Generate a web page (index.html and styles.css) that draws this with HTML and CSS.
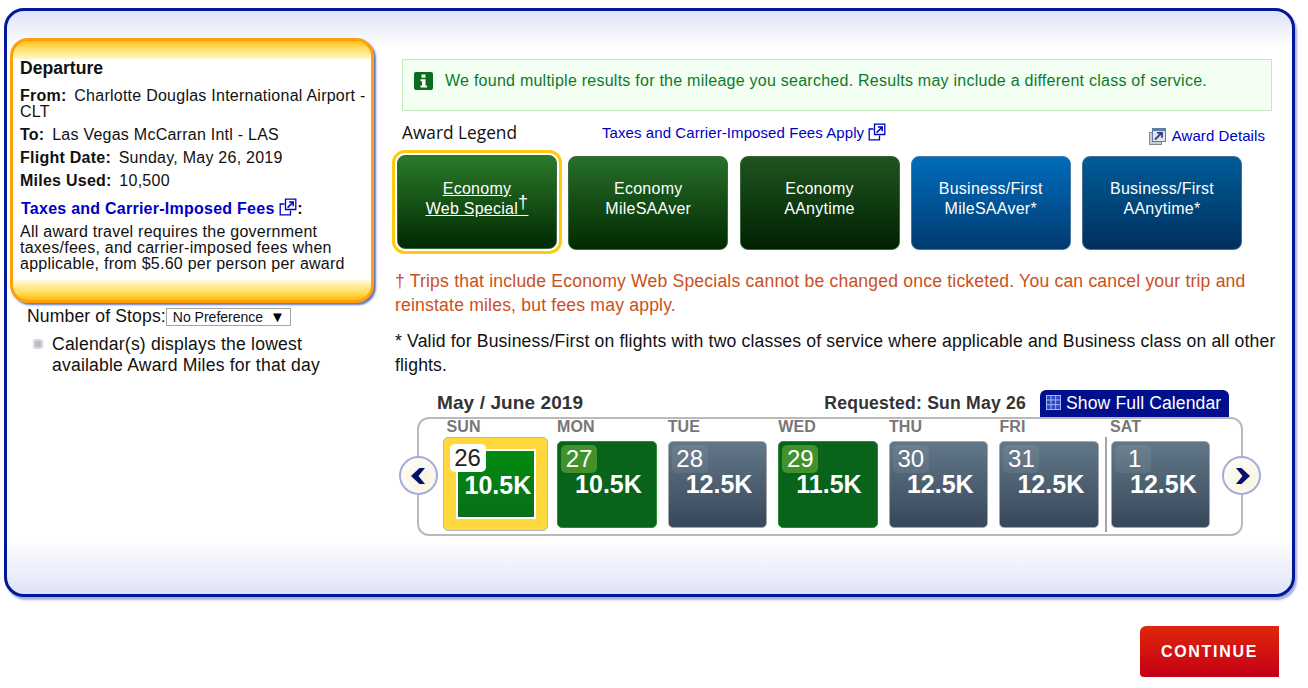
FILE: index.html
```html
<!DOCTYPE html>
<html lang="en">
<head>
<meta charset="utf-8">
<title>Award calendar</title>
<link rel="stylesheet" href="styles.css">
</head>
<body>
<svg class="defs" width="0" height="0" aria-hidden="true">
  <symbol id="ext" viewBox="0 0 18 18">
    <path d="M6.5 1.2H16.8V11.5H6.5Z" fill="none" stroke="currentColor" stroke-width="1.3"/>
    <path d="M5.5 6H1.2V16.8H11.5V12.5" fill="none" stroke="currentColor" stroke-width="1.3"/>
    <path d="M8.6 9.6L14 4.2M10 4H14.2V8.2" fill="none" stroke="currentColor" stroke-width="1.5"/>
  </symbol>
</svg>
<main class="panel">
  <aside class="side">
    <section class="card">
      <h2 class="card-title">Departure</h2>
      <p class="fact fact-first"><b class="fact-key">From:</b> Charlotte Douglas International Airport - CLT</p>
      <p class="fact"><b class="fact-key">To:</b> Las Vegas McCarran Intl - LAS</p>
      <p class="fact"><b class="fact-key">Flight Date:</b> Sunday, May 26, 2019</p>
      <p class="fact"><b class="fact-key">Miles Used:</b> 10,500</p>
      <p class="fees-title"><a class="fees-link" href="#">Taxes and Carrier-Imposed Fees <svg class="ext-icon" width="18" height="18"><use href="#ext"/></svg></a>:</p>
      <p class="fees-text">All award travel requires the government taxes/fees, and carrier-imposed fees when applicable, from $5.60 per person per award</p>
    </section>
    <div class="stops">
      <span>Number of Stops:</span>
      <div class="select"><span>No Preference</span><span class="select-arrow">▼</span></div>
    </div>
    <div class="note"><span class="bullet"></span><p class="note-text">Calendar(s) displays the lowest available Award Miles for that day</p></div>
  </aside>

  <div class="content">
    <div class="alert">
      <svg class="info-icon" width="19" height="18" viewBox="0 0 19 18"><rect width="19" height="18" rx="2" fill="#0b6b1e"/><rect x="7.5" y="2.5" width="4" height="3.2" fill="#fff"/><path d="M6.5 7.2H11.5V13.6H13V15.6H6.5V13.6H8V9.2H6.5Z" fill="#fff"/></svg>
      <span>We found multiple results for the mileage you searched. Results may include a different class of service.</span>
    </div>

    <div class="legend-head">
      <h3 class="legend-title">Award Legend</h3>
      <a class="legend-link" href="#">Taxes and Carrier-Imposed Fees Apply <svg class="ext-icon" width="18" height="18"><use href="#ext"/></svg></a>
      <a class="details-link" href="#"><svg class="details-icon" width="17" height="17" viewBox="0 0 17 17"><rect x=".5" y="4.5" width="12" height="12" fill="#c9ccd1" stroke="#85888e"/><rect x="3.5" y=".5" width="13" height="13" fill="#dfe6ee" stroke="#5d7fa3"/><rect x="3.5" y=".5" width="13" height="2.6" fill="#5d7fa3"/><path d="M6 11.5L12.5 5M8 4.8H13V9.8" fill="none" stroke="#3b3a8c" stroke-width="1.8"/></svg> Award Details</a>
    </div>

    <div class="legend">
      <a class="award award-web" href="#"><span class="award-line">Economy</span><span class="award-line">Web Special<sup class="dagger">†</sup></span></a>
      <a class="award award-saver" href="#"><span class="award-line">Economy</span><span class="award-line">MileSAAver</span></a>
      <a class="award award-any" href="#"><span class="award-line">Economy</span><span class="award-line">AAnytime</span></a>
      <a class="award award-bsaver" href="#"><span class="award-line">Business/First</span><span class="award-line">MileSAAver*</span></a>
      <a class="award award-bany" href="#"><span class="award-line">Business/First</span><span class="award-line">AAnytime*</span></a>
    </div>

    <p class="warning">† Trips that include Economy Web Specials cannot be changed once ticketed. You can cancel your trip and reinstate miles, but fees may apply.</p>
    <p class="valid">* Valid for Business/First on flights with two classes of service where applicable and Business class on all other flights.</p>

    <div class="cal-head">
      <strong class="cal-month">May / June 2019</strong>
      <strong class="cal-req">Requested: Sun May 26</strong>
      <a class="cal-tab" href="#"><svg width="15" height="15" viewBox="0 0 15 15"><path d="M0 0H15V15H0Z" fill="#2c44c4"/><path d="M0 .5H15M0 5H15M0 9.7H15M0 14.5H15M.5 0V15M5 0V15M9.7 0V15M14.5 0V15" stroke="#a4b4fa" stroke-width="1"/></svg> Show Full Calendar</a>
    </div>

    <div class="strip">
      <button class="nav nav-prev" aria-label="Previous"><svg width="20" height="20" viewBox="0 0 20 20"><path d="M10.5 2H16L9.5 10L16 18H10.5L2 10Z" fill="#05106e"/></svg></button>
      <div class="day">
        <div class="day-name">SUN</div>
        <div class="cell cell-sel"><span class="date date-sel">26</span><div class="sel-inner"><span class="amount">10.5K</span></div></div>
      </div>
      <div class="day">
        <div class="day-name">MON</div>
        <div class="cell cell-green"><span class="date">27</span><div class="amount">10.5K</div></div>
      </div>
      <div class="day">
        <div class="day-name">TUE</div>
        <div class="cell cell-gray"><span class="date">28</span><div class="amount">12.5K</div></div>
      </div>
      <div class="day">
        <div class="day-name">WED</div>
        <div class="cell cell-green"><span class="date">29</span><div class="amount">11.5K</div></div>
      </div>
      <div class="day">
        <div class="day-name">THU</div>
        <div class="cell cell-gray"><span class="date">30</span><div class="amount">12.5K</div></div>
      </div>
      <div class="day">
        <div class="day-name">FRI</div>
        <div class="cell cell-gray"><span class="date">31</span><div class="amount">12.5K</div></div>
      </div>
      <div class="day day-break">
        <div class="day-name">SAT</div>
        <div class="cell cell-gray"><span class="date">1</span><div class="amount">12.5K</div></div>
      </div>
      <button class="nav nav-next" aria-label="Next"><svg width="20" height="20" viewBox="0 0 20 20"><path d="M9.5 2H4L10.5 10L4 18H9.5L18 10Z" fill="#05106e"/></svg></button>
    </div>
  </div>
</main>
<div class="actions"><a class="continue" href="#">CONTINUE</a></div>
</body>
</html>
```
FILE: styles.css
```css
* { box-sizing: border-box; }
html, body { margin: 0; padding: 0; }
body {
  width: 1308px;
  height: 688px;
  overflow: hidden;
  background: #fff;
  color: #111;
  font: 16px/20px "Liberation Sans", Arial, sans-serif;
  letter-spacing: 0.25px;
}
.defs { position: absolute; }
p, h2, h3 { margin: 0; }
a { color: #0000c4; text-decoration: none; }

.panel {
  display: flex;
  align-items: flex-start;
  width: 1291px;
  height: 589px;
  margin: 8px 0 0 4px;
  border: 3px solid #00189a;
  border-radius: 20px;
  box-shadow: 2px 3px 2px #a9b0dc;
  background:
    linear-gradient(#dde2f6, #fff) top / 100% 36px no-repeat,
    linear-gradient(#fff, #dfe3f7) bottom / 100% 54px no-repeat,
    #fff;
}

/* left column */
.side { width: 364px; margin: 27px 0 0 3px; flex: none; }
.card {
  height: 265px;
  padding: 17px 2px 0 7px;
  border: 3px solid #ff9f0a;
  border-radius: 18px;
  box-shadow: 2px 2px 2px #6674c0;
  background:
    linear-gradient(#ffc21a, #ffe680 55%, #fff8d0) top / 100% 18px no-repeat,
    linear-gradient(#fffbdc, #ffe46a 55%, #ffbb10) bottom / 100% 20px no-repeat,
    #fff;
}
.card-title { font-size: 17.6px; line-height: 20px; font-weight: 700; letter-spacing: 0; }
.fact { margin-top: 7px; line-height: 16px; }
.fact-first { margin-top: 10px; }
.fact-key { margin-right: 3px; }
.fees-title { margin-top: 9px; margin-left: 1px; line-height: 16px; font-weight: 700; }
.fees-link { color: #0000c4; }
.ext-icon { vertical-align: -2px; color: #0000c4; }
.fees-text { margin-top: 7px; line-height: 16px; }
.stops {
  display: flex;
  align-items: center;
  margin: 3px 0 0 17px;
  font-size: 17.6px;
  line-height: 20px;
  letter-spacing: 0.12px;
}
.select {
  display: flex;
  justify-content: space-between;
  align-items: center;
  width: 125px;
  height: 18px;
  margin-top: 2px;
  padding: 0 5px 0 6px;
  border: 1px solid #a6a6a6;
  background: #fff;
  font-size: 14px;
  letter-spacing: 0;
}
.select-arrow { font-size: 15px; color: #000; }
.note { display: flex; margin: 8px 0 0 23px; }
.bullet {
  flex: none;
  width: 10px;
  height: 10px;
  margin: 5px 9px 0 0;
  border-radius: 4px;
  background: #b8bcc2;
  box-shadow: inset 0 0 0 2px #d6d8dc;
}
.note-text { width: 300px; font-size: 17.6px; line-height: 21px; letter-spacing: 0.18px; }

/* right column */
.content { width: 882px; margin-left: 21px; padding-top: 48px; flex: none; }
.alert {
  display: flex;
  align-items: flex-start;
  gap: 12px;
  width: 870px;
  height: 52px;
  margin-left: 7px;
  padding: 11px 11px 0;
  border: 1px solid #c4e8bd;
  background: #f3fff2;
  color: #0d7a2a;
}
.info-icon { flex: none; margin-top: 1px; }
.legend-head { display: flex; align-items: flex-start; height: 22px; margin: 12px 0 0 7px; width: 863px; }
.legend-title {
  width: 200px;
  font: 400 17.3px/20px "Open Sans", sans-serif;
  letter-spacing: 0;
  color: #111;
}
.legend-link { line-height: 20px; white-space: nowrap; font-size: 15px; letter-spacing: 0.08px; }
.legend-link .ext-icon { vertical-align: -3px; }
.details-link { margin-left: auto; padding-top: 2px; line-height: 22px; white-space: nowrap; font-size: 15px; letter-spacing: 0.08px; }
.details-icon { vertical-align: -4px; margin-right: 2px; }

.legend { display: flex; gap: 11.25px; height: 95px; margin: 10px 0 0 2px; }
.award {
  width: 160px;
  height: 94px;
  margin-top: 1px;
  padding-top: 22px;
  border: 1px solid #3a6a3a;
  border-radius: 8px;
  color: #fff;
  text-align: center;
  line-height: 20px;
}
.award-line { display: block; }
.award-web {
  margin-top: 0;
  padding-top: 23px;
  outline: 3px solid #ffc90e;
  outline-offset: 2px;
  background: linear-gradient(#2b7a2b, #012901);
  text-decoration: underline;
}
.award-web .award-line { text-decoration: underline; }
.dagger { font-size: 18px; line-height: 0; }
.award-saver { background: linear-gradient(#276f2a, #012901); }
.award-any { background: linear-gradient(#1f5420, #012001); }
.award-bsaver { background: linear-gradient(#016cbc, #003b70); border-color: #4a78a0; }
.award-bany { background: linear-gradient(#005c98, #00305e); border-color: #4a6f90; }

.warning { margin-top: 19px; font-size: 17.6px; line-height: 24px; letter-spacing: 0.18px; color: #c9501c; }
.valid { margin-top: 12px; font-size: 17.6px; line-height: 24px; letter-spacing: 0.16px; color: #111; }

.cal-head {
  display: flex;
  align-items: flex-end;
  width: 792px;
  height: 27px;
  margin: 13px 0 0 42px;
  color: #333;
}
.cal-month { font-size: 19px; line-height: 26px; flex: 1; letter-spacing: 0.1px; margin-bottom: 1px; }
.cal-req { font-size: 17.6px; line-height: 26px; margin: 0 14px 1px 0; letter-spacing: 0.2px; }
.cal-tab {
  display: flex;
  align-items: center;
  gap: 5px;
  width: 189px;
  height: 27px;
  padding: 0 0 2px 6px;
  border-radius: 6px 6px 0 0;
  background: #000f8c;
  color: #fff;
  font-size: 17.6px;
  letter-spacing: 0.1px;
}
.strip {
  position: relative;
  display: flex;
  gap: 11px;
  width: 826px;
  height: 119px;
  margin-left: 22px;
  padding: 0 0 0 27.5px;
  border: 2px solid #b9b9b9;
  border-radius: 12px;
}
.nav {
  position: absolute;
  top: 37px;
  width: 39px;
  height: 39px;
  padding: 0;
  display: flex;
  align-items: center;
  justify-content: center;
  border: 2px solid #a6acd8;
  border-radius: 50%;
  background: radial-gradient(circle at 60% 60%, #f6f2dc, #fff 95%);
}
.nav-prev { left: -20px; }
.nav-next { right: -20px; }
.day { position: relative; width: 99.6px; flex: none; }
.day-name {
  height: 16px;
  margin-bottom: 6px;
  font-size: 16px;
  font-weight: 700;
  line-height: 16px;
  color: #777;
  letter-spacing: 0.1px;
}
.cell {
  height: 87px;
  padding: 4px;
  border-radius: 5px;
  color: #fff;
  letter-spacing: 0;
}
.cell-green { background: #07641a; border: 1px solid #2e8a35; padding: 3px; }
.cell-gray { background: linear-gradient(#627787, #37485a); border: 1px solid #a4a8ac; padding: 3px; }
.cell-sel {
  position: relative;
  width: 105px;
  height: 94px;
  margin: -4px 0 0 -4px;
  padding: 11px 11px 0 12px;
  border: 1px solid #b8b8b8;
  background: #ffd83d;
}
.sel-inner {
  height: 70px;
  padding: 22px 0 0 7px;
  border: 2px solid #fff;
  background: linear-gradient(#028c10, #0a6e1a);
}
.date {
  display: block;
  width: 36px;
  height: 28px;
  border-radius: 5px;
  background: rgba(255, 255, 255, 0.07);
  font-size: 24px;
  line-height: 28px;
  text-align: center;
}
.cell-green .date { background: #42912a; }
.date-sel {
  position: absolute;
  top: 6px;
  left: 6px;
  background: #fff;
  color: #222;
}
.amount {
  margin-top: -1px;
  padding-left: 14px;
  font-size: 25px;
  font-weight: 700;
  line-height: 24px;
}
.sel-inner .amount { display: block; padding-left: 0; margin: 0; }
.day-break .cell { margin-left: 1px; }
.day-break .date { padding-left: 3px; }
.day-break .amount { padding-left: 15px; }
.day-break::before {
  content: "";
  position: absolute;
  left: -5px;
  top: 18px;
  width: 1.5px;
  height: 95px;
  background: #a4a4a4;
}

.actions { display: flex; justify-content: flex-end; padding: 29px 29px 0 0; }
.continue {
  display: flex;
  align-items: center;
  justify-content: center;
  width: 139px;
  height: 51px;
  border-radius: 6px 0 0 4px;
  background: linear-gradient(#e0260a, #c30016);
  color: #fff;
  font-size: 16px;
  font-weight: 700;
  letter-spacing: 1.7px;
}
```
